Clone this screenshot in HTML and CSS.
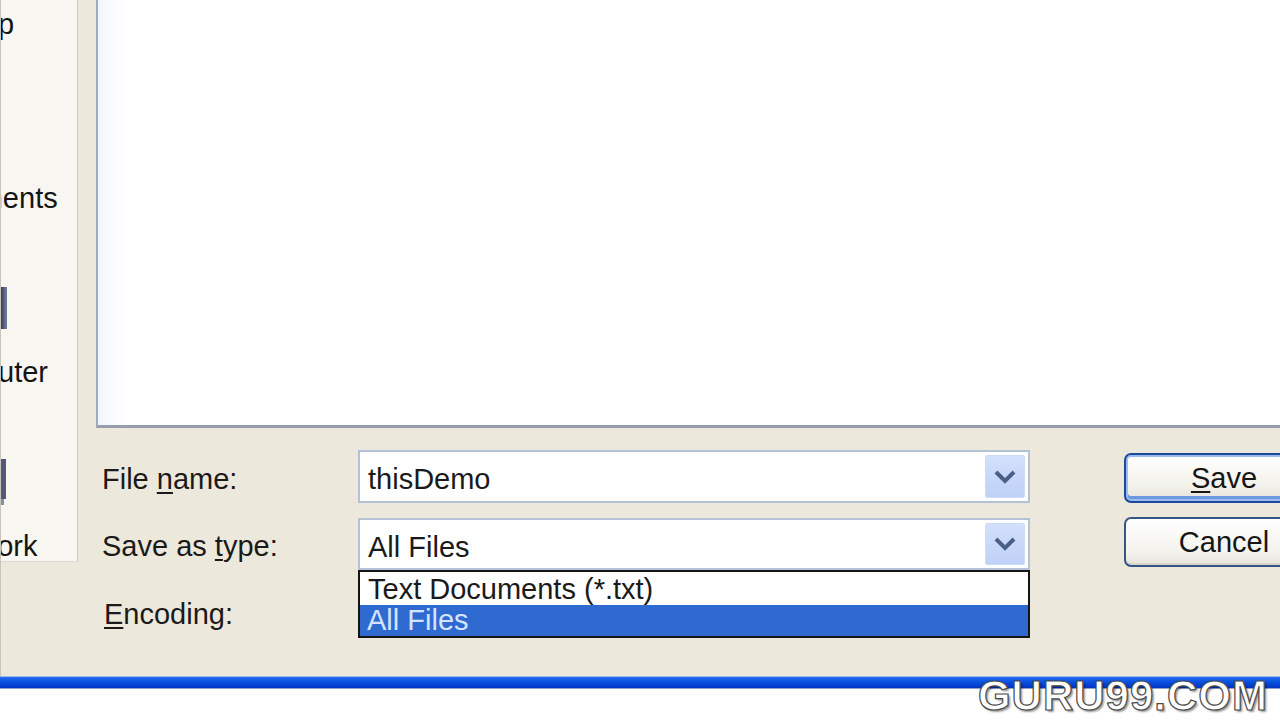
FILE: index.html
```html
<!DOCTYPE html>
<html>
<head>
<meta charset="utf-8">
<title>Save As</title>
<link rel="stylesheet" href="styles.css">
</head>
<body>
<div class="dialog">
  <aside class="places">
    <div class="places-list">
      <div class="place"><div class="place-icon"></div><div class="place-label">Desktop</div></div>
      <div class="place"><div class="place-icon"></div><div class="place-label">My Documents</div></div>
      <div class="place">
        <div class="place-icon">
          <svg width="92" height="48" viewBox="0 0 92 48"><defs><linearGradient id="mc" x1="0" y1="0" x2="1" y2="0"><stop offset="0" stop-color="#33334f"/><stop offset="1" stop-color="#7a7ea8"/></linearGradient></defs><rect x="85" y="4" width="7" height="42" fill="url(#mc)"/></svg>
        </div>
        <div class="place-label">My Computer</div>
      </div>
      <div class="place">
        <div class="place-icon">
          <svg width="92" height="48" viewBox="0 0 92 48"><rect x="86" y="2" width="5" height="40" fill="#55577a"/><rect x="86" y="42" width="3" height="6" fill="#8a8ca8"/></svg>
        </div>
        <div class="place-label">My Network</div>
      </div>
    </div>
  </aside>
  <div class="main">
    <div class="filelist"></div>
    <div class="form">
      <div class="label">File <u>n</u>ame:</div>
      <div class="combo">
        <div class="combo-text">thisDemo</div>
        <div class="combo-btn"><svg width="22" height="14" viewBox="0 0 22 14"><path d="M2 2 L11 11 L20 2" fill="none" stroke="#4a5f86" stroke-width="4"/></svg></div>
      </div>
      <button class="btn btn-default"><u>S</u>ave</button>

      <div class="label">Save as <u>t</u>ype:</div>
      <div class="combo combo-open">
        <div class="combo-text">All Files</div>
        <div class="combo-btn"><svg width="22" height="14" viewBox="0 0 22 14"><path d="M2 2 L11 11 L20 2" fill="none" stroke="#4a5f86" stroke-width="4"/></svg></div>
      </div>
      <button class="btn btn-cancel">Cancel</button>

      <div class="label label-enc"><u>E</u>ncoding:</div>

      <ul class="droplist">
        <li class="drop-item">Text Documents (*.txt)</li>
        <li class="drop-item drop-selected">All Files</li>
      </ul>
    </div>
  </div>
</div>
<div class="bar"></div>
<div class="below">
  <div class="watermark">GURU99.COM</div>
</div>
</body>
</html>
```
FILE: styles.css
```css
* { box-sizing: border-box; }
html, body { margin: 0; padding: 0; }
body {
  width: 1280px;
  height: 720px;
  overflow: hidden;
  background: #ffffff;
  font-family: "Liberation Sans", Arial, sans-serif;
  color: #161616;
}
.dialog {
  height: 676px;
  display: flex;
  align-items: flex-start;
  background: #ede8dc;
  border-left: 1px solid #c9c5bb;
}
.places {
  width: 77px;
  height: 562px;
  flex: none;
  background: #f7f6f1;
  border-right: 1px solid #cfccc2;
  border-bottom: 1px solid #dedbd1;
  overflow: hidden;
}
.places-list {
  width: 240px;
  margin-left: -160px;
  margin-top: -65px;
}
.place {
  height: 174px;
  display: flex;
  flex-direction: column;
  align-items: center;
}
.place-icon {
  width: 92px;
  height: 48px;
  flex: none;
}
.place-icon svg { display: block; }
.place-label {
  margin-top: 24px;
  font-size: 29px;
  line-height: 34px;
  white-space: nowrap;
  color: #141414;
}
.main {
  flex: 1;
  margin-left: 18px;
  display: flex;
  flex-direction: column;
}
.filelist {
  height: 428px;
  border-left: 2px solid #9eadc2;
  border-bottom: 3px solid #969eab;
  background: linear-gradient(to right, #f1f6fd 0, #fbfcff 16px, #ffffff 32px);
}
.form {
  position: relative;
  padding: 22px 0 0 6px;
  display: grid;
  grid-template-columns: 256px 672px 294px;
  grid-template-rows: 53px 52px 54px;
  row-gap: 15px;
}
.label {
  align-self: center;
  font-size: 29px;
  line-height: 34px;
  white-space: nowrap;
  color: #1a1a1a;
  padding-top: 4px;
}
.label u { text-decoration-thickness: 2px; text-underline-offset: 3px; }
.label-enc { padding-left: 2px; grid-column: 1; }
.combo {
  display: flex;
  align-items: stretch;
  padding: 3px;
  background: #ffffff;
  border: 2px solid #b3c2d6;
  height: 53px;
}
.combo-open { height: 52px; }
.combo-text {
  flex: 1;
  padding-left: 5px;
  font-size: 29px;
  line-height: 44px;
  padding-top: 2px;
  color: #1a1a1a;
  white-space: nowrap;
}
.combo-btn {
  width: 40px;
  flex: none;
  border: 1px solid #d0dcf5;
  border-radius: 2px;
  background: linear-gradient(#d3e0fc, #c0d1f7);
  display: flex;
  align-items: center;
  justify-content: center;
}
.combo-btn svg { display: block; }
.btn {
  margin-left: 94px;
  width: 200px;
  height: 50px;
  font-family: "Liberation Sans", Arial, sans-serif;
  font-size: 29px;
  color: #161616;
  padding: 0;
  border-radius: 7px;
  align-self: start;
}
.btn u { text-decoration-thickness: 2px; text-underline-offset: 3px; }
.btn-default {
  margin-top: 3px;
  border: 2px solid #1b4a9c;
  background: linear-gradient(#ffffff, #f2f1ea 70%, #e3e1d6);
  box-shadow: inset 0 0 0 2px #9cbcf0, inset 0 -3px 0 2px #6e98e2;
}
.btn-cancel {
  margin-top: -1px;
  border: 2px solid #345788;
  background: linear-gradient(#ffffff, #f4f3ee 70%, #e6e4da);
  box-shadow: inset 0 -2px 0 0 #d8d5ca;
}
.droplist {
  position: absolute;
  left: 262px;
  top: 142px;
  width: 672px;
  height: 68px;
  margin: 0;
  padding: 0;
  list-style: none;
  background: #ffffff;
  border: 2px solid #151515;
}
.drop-item {
  font-size: 29px;
  height: 33px;
  line-height: 35px;
  padding-left: 8px;
  color: #1a1a1a;
  white-space: nowrap;
}
.drop-selected {
  height: 31px;
  line-height: 31px;
  padding-left: 7px;
  background: #2f6ad0;
  color: #d4e4ff;
}
.bar {
  height: 13px;
  border-top: 1px solid #9db8ee;
  background: linear-gradient(#2a6ff0, #0a52e2 40%, #0034c4);
  border-bottom: 1px solid #8f9fc8;
}
.below {
  position: relative;
  height: 31px;
  background: #ffffff;
}
.watermark {
  position: absolute;
  right: 12px;
  top: -14px;
  font-family: "Liberation Sans", Arial, sans-serif;
  font-weight: bold;
  font-size: 42px;
  line-height: 42px;
  letter-spacing: 1px;
  color: #ffffff;
  -webkit-text-stroke: 1.2px #4a4a4a;
  text-shadow: 2px 2px 2px rgba(0,0,0,0.4);
  white-space: nowrap;
}
```
